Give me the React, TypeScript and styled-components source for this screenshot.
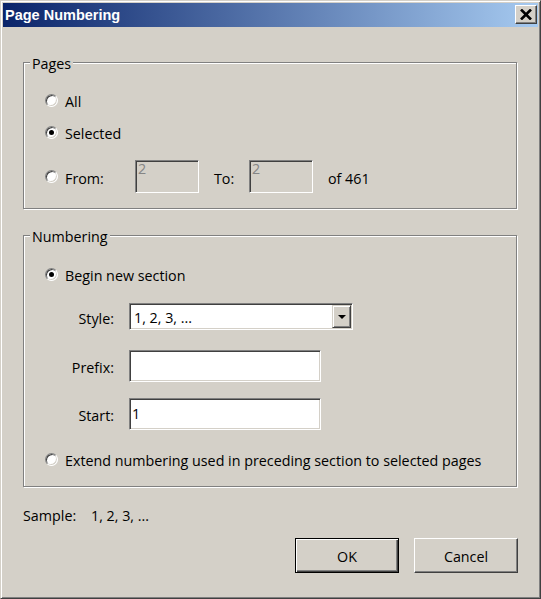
import React from 'react';
import styled, { createGlobalStyle, css } from 'styled-components';

const FACE = '#d4d0c8';

const GlobalStyle = createGlobalStyle`
  html, body { margin: 0; padding: 0; background: ${FACE}; }
  body {
    font-family: "Open Sans", "Noto Sans", sans-serif;
    font-size: 14.3px;
    color: #000;
  }
  * { box-sizing: border-box; }
`;

const Window = styled.div`
  width: 541px;
  height: 599px;
  display: flex;
  flex-direction: column;
  background: ${FACE};
  border: 1px solid;
  border-color: ${FACE} #404040 #404040 ${FACE};
  box-shadow: inset 1px 1px 0 #fff, inset -1px -1px 0 #808080;
  padding: 2px;
`;

const TitleBar = styled.div`
  flex: none;
  height: 24px;
  display: flex;
  align-items: center;
  justify-content: space-between;
  padding: 0 1px 0 2px;
  background: linear-gradient(to right, #0a246a, #a6caf0);
`;

const Title = styled.span`
  font-family: "Liberation Sans", Arial, sans-serif;
  font-weight: bold;
  font-size: 14.5px;
  line-height: 15px;
  color: #fff;
`;

const CloseButton = styled.div`
  align-self: flex-start;
  margin-top: 2px;
  width: 22px;
  height: 19px;
  display: flex;
  align-items: center;
  justify-content: center;
  background: ${FACE};
  border: 1px solid;
  border-color: #fff #404040 #404040 #fff;
  box-shadow: inset -1px -1px 0 #808080;
`;

const Body = styled.div`
  flex: 1;
  display: flex;
  flex-direction: column;
  padding: 35px 20px 0 20px;
`;

const Group = styled.div<{ $pad: string; $mt?: number }>`
  position: relative;
  margin-right: 1px;
  margin-top: ${p => p.$mt ?? 0}px;
  border: 1px solid #808080;
  box-shadow: 1px 1px 0 #fff, inset 1px 1px 0 #fff;
  padding: ${p => p.$pad};
  display: flex;
  flex-direction: column;
`;

const GroupLabel = styled.span`
  position: absolute;
  top: -9px;
  left: 6px;
  padding: 0 2px;
  line-height: 19px;
  background: ${FACE};
`;

const Row = styled.div<{ $h: number; $mt?: number }>`
  display: flex;
  align-items: center;
  height: ${p => p.$h}px;
  margin-top: ${p => p.$mt ?? 0}px;
`;

const RadioMark = styled.span<{ $checked?: boolean }>`
  position: relative;
  flex: none;
  width: 13px;
  height: 13px;
  margin-right: 7px;
  border-radius: 50%;
  background: #fff;
  border: 1px solid;
  border-color: #808080 #fff #fff #808080;
  box-shadow: inset 1px 1px 0 #404040, inset -1px -1px 0 ${FACE};
  ${p =>
    p.$checked &&
    css`
      &::after {
        content: '';
        position: absolute;
        left: 3px;
        top: 3px;
        width: 5px;
        height: 5px;
        border-radius: 50%;
        background: #000;
      }
    `}
`;

const Label = styled.span<{ $w?: number; $ml?: number }>`
  flex: none;
  width: ${p => (p.$w ? `${p.$w}px` : 'auto')};
  margin-left: ${p => p.$ml ?? 0}px;
  padding-top: 3px;
  white-space: nowrap;
`;

const Field = styled.div<{ $w: number; $h: number; $disabled?: boolean; $pt?: number }>`
  flex: none;
  width: ${p => p.$w}px;
  height: ${p => p.$h}px;
  display: flex;
  align-items: flex-start;
  padding: ${p => p.$pt ?? 0}px 0 0 2px;
  line-height: 10px;
  background: ${p => (p.$disabled ? FACE : '#fff')};
  color: ${p => (p.$disabled ? '#858585' : '#000')};
  border: 1px solid;
  border-color: #808080 #fff #fff #808080;
  box-shadow: inset 1px 1px 0 #404040, inset -1px -1px 0 ${FACE};
`;

const SelectBox = styled(Field)`
  padding: 1px;
  align-items: stretch;
`;

const SelectText = styled.span`
  flex: 1;
  display: flex;
  align-items: center;
  padding: 2px 0 0 3px;
`;

const DropButton = styled.div`
  flex: none;
  width: 19px;
  display: flex;
  align-items: center;
  justify-content: center;
  background: ${FACE};
  border: 1px solid;
  border-color: ${FACE} #404040 #404040 ${FACE};
  box-shadow: inset 1px 1px 0 #fff, inset -1px -1px 0 #808080;
`;

const FormRow = styled.div<{ $mt: number }>`
  display: grid;
  grid-template-columns: 69px auto;
  column-gap: 15px;
  align-items: center;
  justify-items: start;
  margin-top: ${p => p.$mt}px;
`;

const FormLabel = styled.span`
  justify-self: end;
  padding-top: 3px;
  white-space: nowrap;
`;

const SampleRow = styled.div`
  display: flex;
  align-items: center;
  height: 20px;
  margin-top: 17px;
  line-height: 20px;
`;

const ButtonRow = styled.div`
  display: flex;
  justify-content: flex-end;
  gap: 15px;
  margin-top: 14px;
`;

const Button = styled.button<{ $default?: boolean }>`
  width: 104px;
  height: 35px;
  padding: 2px 0 0;
  font: inherit;
  color: #000;
  background: ${FACE};
  border: 1px solid;
  ${p =>
    p.$default
      ? css`
          border-color: #000;
          box-shadow: inset 1px 1px 0 #fff, inset -1px -1px 0 #404040, inset -2px -2px 0 #808080;
        `
      : css`
          border-color: #fff #404040 #404040 #fff;
          box-shadow: inset -1px -1px 0 #808080;
        `}
`;

const Radio: React.FC<{ checked?: boolean; children: React.ReactNode; h?: number; mt?: number }> = ({
  checked,
  children,
  h = 32,
  mt,
}) => (
  <Row $h={h} $mt={mt}>
    <RadioMark $checked={checked} />
    <Label>{children}</Label>
  </Row>
);

export default function App() {
  return (
    <>
      <GlobalStyle />
      <Window>
        <TitleBar>
          <Title>Page Numbering</Title>
          <CloseButton>
            <svg width="12" height="11" viewBox="0 0 12 11">
              <path d="M1 0.5 L11 10.5 M11 0.5 L1 10.5" stroke="#000" strokeWidth="2.6" fill="none" />
            </svg>
          </CloseButton>
        </TitleBar>
        <Body>
          <Group $pad="21px 0 15px 21px">
            <GroupLabel>Pages</GroupLabel>
            <Radio>All</Radio>
            <Radio checked>Selected</Radio>
            <Row $h={33} $mt={12}>
              <RadioMark />
              <Label $w={70}>From:</Label>
              <Field $w={64} $h={33} $disabled $pt={3}>2</Field>
              <Label $w={35} $ml={15}>To:</Label>
              <Field $w={64} $h={33} $disabled $pt={3}>2</Field>
              <Label $ml={15}>of 461</Label>
            </Row>
          </Group>

          <Group $pad="22px 0 11px 21px" $mt={26}>
            <GroupLabel>Numbering</GroupLabel>
            <Radio checked>Begin new section</Radio>
            <FormRow $mt={13}>
              <FormLabel>Style:</FormLabel>
              <SelectBox $w={224} $h={27}>
                <SelectText>1, 2, 3, ...</SelectText>
                <DropButton>
                  <svg width="8" height="4" viewBox="0 0 8 4">
                    <path d="M0 0 H8 L4 4 Z" fill="#000" />
                  </svg>
                </DropButton>
              </SelectBox>
            </FormRow>
            <FormRow $mt={20}>
              <FormLabel>Prefix:</FormLabel>
              <Field $w={192} $h={32} />
            </FormRow>
            <FormRow $mt={16}>
              <FormLabel>Start:</FormLabel>
              <Field $w={192} $h={32} $pt={10}>1</Field>
            </FormRow>
            <Radio mt={13}>Extend numbering used in preceding section to selected pages</Radio>
          </Group>

          <SampleRow>
            <Label $w={68}>Sample:</Label>
            <Label>1, 2, 3, ...</Label>
          </SampleRow>

          <ButtonRow>
            <Button $default>OK</Button>
            <Button>Cancel</Button>
          </ButtonRow>
        </Body>
      </Window>
    </>
  );
}
